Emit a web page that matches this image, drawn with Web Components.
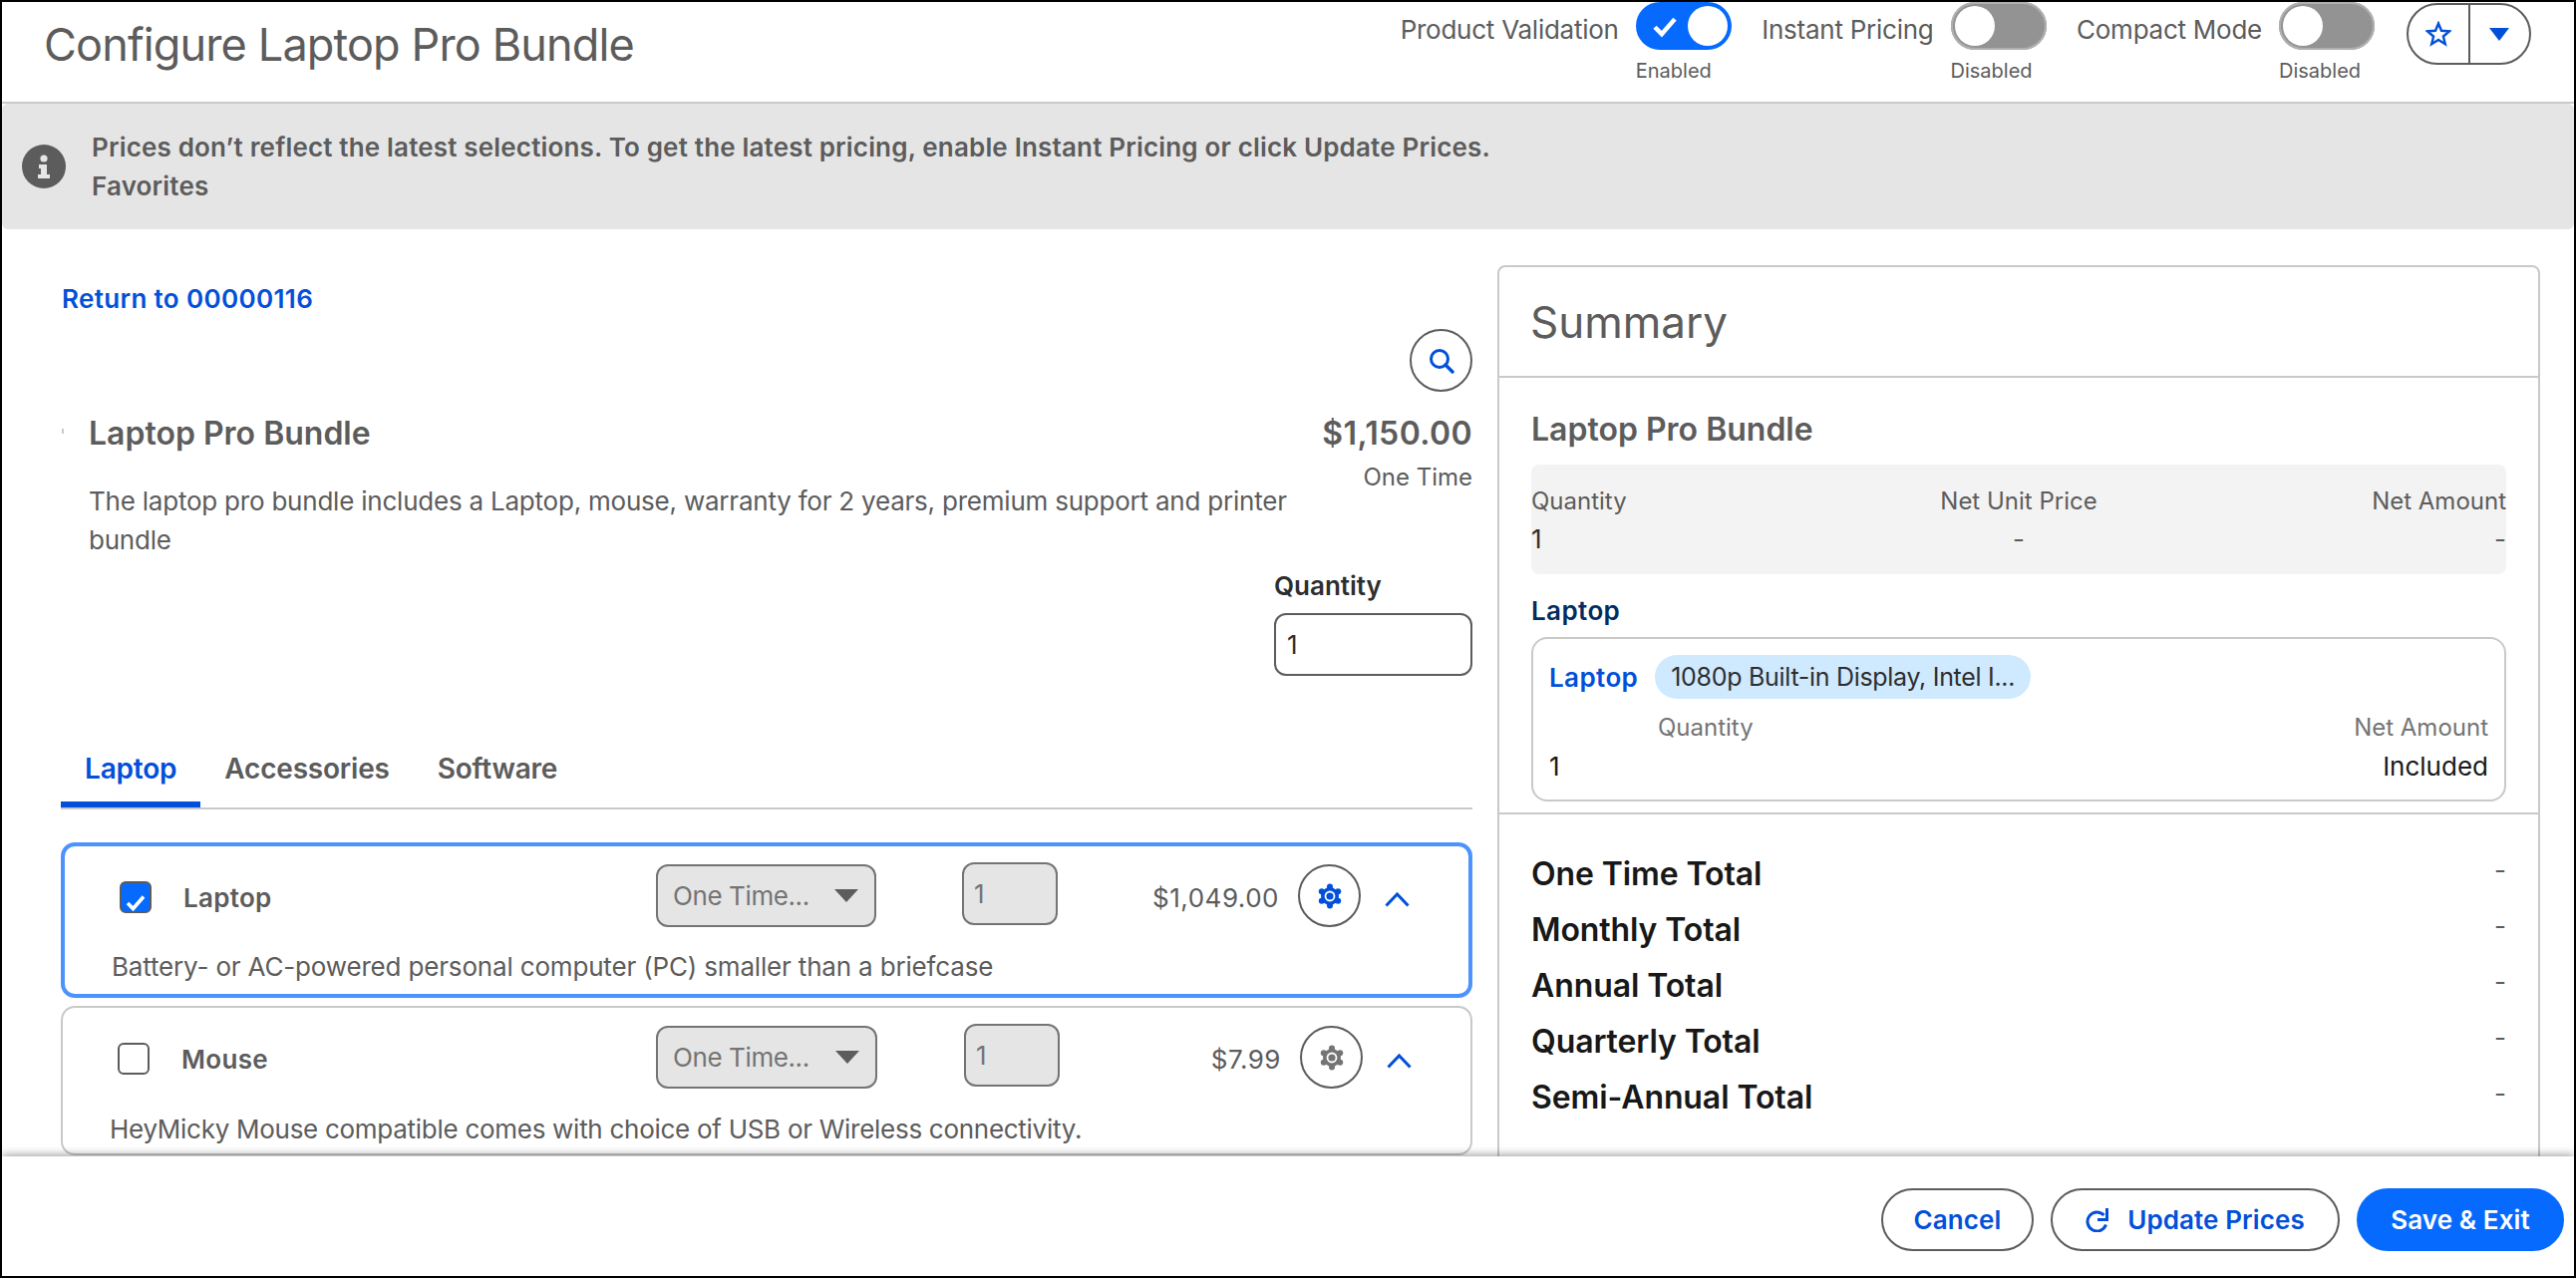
<!DOCTYPE html>
<html lang="en">
<head>
<meta charset="utf-8">
<title>Configure Laptop Pro Bundle</title>
<style>
  html, body { margin: 0; height: 100%; }
  body { font: 26px/39px Inter, "Liberation Sans", sans-serif; color: #5c5c5c; }
</style>
</head>
<body>
<cfg-app>
  <cfg-topbar>
    <cfg-toggle label="Product Validation" status="Enabled" on></cfg-toggle>
    <cfg-toggle label="Instant Pricing" status="Disabled"></cfg-toggle>
    <cfg-toggle label="Compact Mode" status="Disabled"></cfg-toggle>
  </cfg-topbar>
  <cfg-banner>
    Prices don’t reflect the latest selections. To get the latest pricing, enable Instant Pricing or click Update Prices.<br>Favorites
  </cfg-banner>
  <cfg-main>
    <cfg-product>
      <cfg-option slot="options" selected price="$1,049.00">
        Laptop
        <span slot="desc" style="letter-spacing:-.17px">Battery- or AC-powered personal computer (PC) smaller than a briefcase</span>
      </cfg-option>
      <cfg-option slot="options" price="$7.99">
        Mouse
        <span slot="desc" style="letter-spacing:-.28px">HeyMicky Mouse compatible comes with choice of USB or Wireless connectivity.</span>
      </cfg-option>
    </cfg-product>
    <cfg-summary></cfg-summary>
  </cfg-main>
  <cfg-footer></cfg-footer>
</cfg-app>

<script>
const BLUE = '#0250d9';

const icons = {
  check: '<svg viewBox="0 0 24 24" width="100%" height="100%"><path d="M4 13l5.5 5.5L20 6.500" fill="none" stroke="currentColor" stroke-width="3.600"/></svg>',
  star: '<svg viewBox="0 0 26 26" width="26" height="26"><path d="M13 2.500l3 7.300 7.900.6-6 5.100 1.900 7.700L13 19l-6.800 4.200 1.900-7.700-6-5.100 7.900-.6z" fill="none" stroke="currentColor" stroke-width="2.400" stroke-linejoin="miter"/></svg>',
  down: '<svg viewBox="0 0 20 13" width="20" height="13"><path d="M0 0h20L10 13z" fill="currentColor"/></svg>',
  search: '<svg viewBox="0 0 26 26" width="26" height="26"><circle cx="11" cy="11" r="8.500" fill="none" stroke="currentColor" stroke-width="3"/><path d="M17 17l7 7" stroke="currentColor" stroke-width="3.400" stroke-linecap="round"/></svg>',
  info: '<svg viewBox="0 0 44 44" width="44" height="44"><circle cx="22" cy="22" r="22" fill="#5c5c5c"/><circle cx="22" cy="14" r="3.600" fill="#e5e5e5"/><path d="M17 20h8v10h3v4H16v-4h3v-6h-2z" fill="#e5e5e5"/></svg>',
  gear: '<svg viewBox="0 0 26 26" width="26" height="26"><g fill="currentColor"><circle cx="13" cy="13" r="9"/><circle cx="13" cy="3.500" r="3"/><circle cx="13" cy="22.500" r="3"/><circle cx="4.800" cy="8.200" r="3"/><circle cx="21.200" cy="8.200" r="3"/><circle cx="4.800" cy="17.800" r="3"/><circle cx="21.200" cy="17.800" r="3"/></g><circle cx="13" cy="13" r="5.400" fill="#fff"/><circle cx="13" cy="13" r="3.600" fill="currentColor"/></svg>',
  up: '<svg viewBox="0 0 25 16" width="25" height="16"><path d="M1.500 14.500L12.500 3l11 11.500" fill="none" stroke="currentColor" stroke-width="3"/></svg>',
  refresh: '<svg viewBox="0 0 24 24" width="24" height="24"><path d="M18.500 7A9.500 9.500 0 1 0 20.500 16.500" fill="none" stroke="currentColor" stroke-width="3"/><path d="M21.500 0v11.500H12" fill="none" stroke="currentColor" stroke-width="3"/></svg>',
  caret: '<svg viewBox="0 0 24 13" width="24" height="13"><path d="M0 0h24L12 13z" fill="#5c5c5c"/></svg>'
};

// small helper, every element here is just a shadow root with fixed markup
const define = (name, css, html) => customElements.define(name, class extends HTMLElement {
  connectedCallback() {
    if (this.shadowRoot) return;
    const markup = typeof html === 'function' ? html(this) : html;
    this.attachShadow({ mode: 'open' }).innerHTML = `<style>${css}</style>${markup}`;
  }
});

define('cfg-app', `
  :host { display: flex; flex-direction: column; box-sizing: border-box; width: 2584px; height: 1282px;
    border: 2px solid #000; background: #fff; overflow: hidden; }
`, '<slot></slot>');

define('cfg-topbar', `
  :host { display: flex; align-items: flex-start; flex: none; height: 100px; border-bottom: 2px solid #c9c9c9;
    padding: 0 43px 0 42px; }
  h1 { flex: 1; margin: 0; font-size: 45px; line-height: 56px; font-weight: 400; letter-spacing: -.85px; padding-top: 15px; color: #5c5c5c; }
  .tools { display: flex; gap: 30.500px; }
  .group { display: flex; width: 125px; height: 62px; margin: 1px 0 0 1.500px; box-sizing: border-box; border: 2px solid #5c5c5c;
    border-radius: 31px; color: ${BLUE}; }
  .group span { flex: 1; display: flex; align-items: center; justify-content: center; }
  .group span + span { border-left: 2px solid #5c5c5c; }
`, `<h1>Configure Laptop Pro Bundle</h1>
  <div class="tools"><slot></slot>
    <div class="group"><span>${icons.star}</span><span>${icons.down}</span></div>
  </div>`);

define('cfg-toggle', `
  :host { display: flex; align-items: flex-start; gap: 17px; font-size: 26px; letter-spacing: -.25px; }
  .label { line-height: 56px; }
  .track { display: flex; width: 96px; height: 48px; box-sizing: border-box; padding: 4px; border-radius: 24px;
    background: #939393; box-shadow: inset 0 0 0 2px #b0b0b0; }
  .on .track { background: #066afe; box-shadow: none; justify-content: space-between; color: #fff; }
  .knob { width: 40px; height: 40px; border-radius: 50%; background: #fff; }
  .tick { width: 30px; height: 30px; margin: 5px 0 0 10px; }
  .status { font-size: 20px; line-height: 30px; margin-top: 6px; letter-spacing: 0; }
`, el => `<span class="label">${el.getAttribute('label')}</span>
  <div class="${el.hasAttribute('on') ? 'on' : ''}">
    <div class="track">${el.hasAttribute('on') ? `<span class="tick">${icons.check}</span>` : ''}<span class="knob"></span></div>
    <div class="status">${el.getAttribute('status')}</div>
  </div>`);

define('cfg-banner', `
  :host { display: flex; align-items: center; gap: 26px; flex: none; box-sizing: border-box; height: 126px;
    padding: 0 20px; background: #e5e5e5; border-radius: 6px; font-weight: 600; letter-spacing: .17px; }
  svg { display: block; }
`, `<span>${icons.info}</span><div><slot></slot></div>`);

define('cfg-main', `
  :host { display: grid; grid-template-columns: 1415px 1046px; gap: 25px; flex: 1; min-height: 0; overflow: hidden;
    padding: 0 34px 0 60px; }
`, '<slot></slot>');

define('cfg-product', `
  :host { display: block; padding-top: 50px; }
  a { color: ${BLUE}; font-weight: 600; letter-spacing: .35px; }
  .finder { display: flex; justify-content: flex-end; margin-top: 11px; }
  .round { display: flex; align-items: center; justify-content: center; width: 63px; height: 63px; box-sizing: border-box;
    border: 2px solid #5c5c5c; border-radius: 50%; color: ${BLUE}; }
  .head { display: flex; justify-content: space-between; margin-top: 22px; }
  .dot { flex: none; width: 2px; height: 5px; background: #c9c9c9; margin: 15px 25px 0 0; }
  .info { flex: 1; }
  h2 { margin: 0; font-size: 32px; line-height: 40px; font-weight: 600; }
  p { margin: 28px 0 0; width: 1225px; letter-spacing: -.22px; }
  .price { text-align: right; flex: none; }
  .price b { display: block; font-size: 32px; line-height: 40px; font-weight: 600; letter-spacing: .4px; }
  .price span { display: block; font-size: 24px; line-height: 39px; margin-top: 4px; }
  .qty { width: 199px; margin: 7px 0 0 auto; }
  .qty label { display: block; font-weight: 600; color: #2e2e2e; }
  .field { box-sizing: border-box; height: 63px; margin-top: 8px; padding: 10px 11px; border: 2px solid #5c5c5c; border-radius: 12px; color: #2e2e2e; }
  .tabs { display: flex; margin: 73px 0 0 -1px; border-bottom: 2px solid #c9c9c9; font-size: 28px; font-weight: 600; letter-spacing: -.2px; }
  .tab { box-sizing: border-box; height: 59px; padding: 1px 24px 0; }
  .tab.active { color: ${BLUE}; border-bottom: 6px solid ${BLUE}; }
  .options { display: flex; flex-direction: column; gap: 8px; margin: 33px 0 0 -1px; }
`, `<a>Return to 00000116</a>
  <div class="finder"><span class="round">${icons.search}</span></div>
  <div class="head">
    <span class="dot"></span>
    <div class="info"><h2>Laptop Pro Bundle</h2>
      <p>The laptop pro bundle includes a Laptop, mouse, warranty for 2 years, premium support and printer bundle</p></div>
    <div class="price"><b>$1,150.00</b><span>One Time</span></div>
  </div>
  <div class="qty"><label>Quantity</label><div class="field">1</div></div>
  <div class="tabs"><div class="tab active">Laptop</div><div class="tab">Accessories</div><div class="tab">Software</div></div>
  <div class="options"><slot name="options"></slot></div>`);

define('cfg-option', `
  :host { display: block; box-sizing: border-box; border: 2px solid #c9c9c9; border-radius: 14px; padding: 18px 0 5px 47px;
    --lead: 476px; --sel: 222px; --sel-gap: 87px; --desc: 21px; }
  :host([selected]) { border: 4px solid #4d93ff; padding-bottom: 8px; --lead: 474px; --sel: 221px; --sel-gap: 86px; --desc: 20px; }
  .row { display: flex; align-items: flex-start; height: 63px; padding-left: 8px; }
  .box { flex: none; box-sizing: border-box; width: 32px; height: 32px; margin-top: 17px; padding: 2px; border: 2px solid #5c5c5c; border-radius: 6px; color: #fff; }
  :host([selected]) .box { background: #066afe; }
  .name { flex: none; box-sizing: border-box; width: var(--lead); margin-left: 32px; line-height: 39px; margin-top: 14px; font-weight: 600; letter-spacing: .3px; }
  .select { flex: none; display: flex; align-items: center; justify-content: space-between; box-sizing: border-box; width: var(--sel); height: 63px;
    padding: 0 16px 0 15px; background: #e5e5e5; border: 2px solid #747474; border-radius: 12px; color: #747474; letter-spacing: -.4px; }
  .num { flex: none; display: flex; align-items: center; box-sizing: border-box; width: 96px; height: 63px; margin: -2px 0 0 var(--sel-gap); padding: 0 10px; background: #e5e5e5; border: 2px solid #747474; border-radius: 12px; color: #747474; }
  .amount { flex: none; width: 222px; margin-top: 14px; text-align: right; letter-spacing: .5px; }
  .round { flex: none; display: flex; align-items: center; justify-content: center; box-sizing: border-box; width: 63px; height: 63px; margin-left: 19px; border: 2px solid #5c5c5c; border-radius: 50%; color: #747474; }
  :host([selected]) .round { color: ${BLUE}; }
  .up { flex: none; display: flex; margin: 27px 0 0 24px; color: ${BLUE}; }
  .desc { display: block; margin-top: var(--desc); }
`, el => `<div class="row">
    <span class="box">${el.hasAttribute('selected') ? icons.check : ''}</span>
    <span class="name"><slot></slot></span>
    <span class="select">One Time...${icons.caret}</span>
    <span class="num">1</span>
    <span class="amount">${el.getAttribute('price')}</span>
    <span class="round">${icons.gear}</span>
    <span class="up">${icons.up}</span>
  </div>
  <div class="desc"><slot name="desc"></slot></div>`);

define('cfg-summary', `
  :host { display: block; box-sizing: border-box; height: 1100px; margin-top: 36px; border: 2px solid #c9c9c9; border-radius: 8px; }
  .title { box-sizing: border-box; height: 111px; padding: 27px 32px 0 31px; font-size: 44px; line-height: 56px; border-bottom: 2px solid #c9c9c9; }
  .body { padding: 32px 32px 0; }
  h3 { margin: 0; font-size: 32px; line-height: 40px; font-weight: 600; }
  .stats { display: grid; grid-template-columns: 1fr auto 1fr; grid-template-rows: 38px 38px; align-items: center; height: 110px; box-sizing: border-box;
    margin-top: 15px; padding-top: 17px; background: #f3f3f3; border-radius: 8px; }
  .stats > :nth-child(3n+2) { text-align: center; }
  .stats > :nth-child(3n) { text-align: right; }
  .stats > :nth-child(-n+3) { font-size: 24px; }
  .stats .val { color: #2e2e2e; }
  h4 { margin: 16.500px 0 0; line-height: 39px; font-size: 26px; font-weight: 600; color: #032d60; letter-spacing: .4px; }
  .card { box-sizing: border-box; height: 165px; margin-top: 7.500px; padding: 16px 16px 0; border: 2px solid #c9c9c9; border-radius: 16px; }
  .line { display: flex; align-items: center; height: 44px; gap: 17px; }
  .line a { color: ${BLUE}; font-weight: 600; letter-spacing: .4px; }
  .chip { padding: 0 16px; height: 44px; line-height: 44px; background: #cfe9fe; border-radius: 22px; color: #2e2e2e; font-size: 25px; letter-spacing: -.3px; }
  .cols { display: flex; justify-content: space-between; margin-top: 9px; }
  .cols.head { padding-left: 109px; color: #747474; font-size: 24px; }
  .cols.vals { margin-top: 0; color: #181818; }
  hr { border: 0; border-top: 2px solid #c9c9c9; margin: 11px 0 0; }
  .totals { padding: 32px 32px 0; }
  .total { display: flex; justify-content: space-between; height: 56px; line-height: 56px; }
  .total b { font-size: 32px; font-weight: 600; color: #181818; letter-spacing: -.1px; }
  .total span { line-height: 48px; }
`, `<div class="title">Summary</div>
  <div class="body">
    <h3>Laptop Pro Bundle</h3>
    <div class="stats"><span>Quantity</span><span>Net Unit Price</span><span>Net Amount</span>
      <span class="val">1</span><span>-</span><span>-</span></div>
    <h4>Laptop</h4>
    <div class="card">
      <div class="line"><a>Laptop</a><span class="chip">1080p Built-in Display, Intel I...</span></div>
      <div class="cols head"><span>Quantity</span><span>Net Amount</span></div>
      <div class="cols vals"><span>1</span><span>Included</span></div>
    </div>
  </div>
  <hr>
  <div class="totals">
    <div class="total"><b>One Time Total</b><span>-</span></div>
    <div class="total"><b>Monthly Total</b><span>-</span></div>
    <div class="total"><b>Annual Total</b><span>-</span></div>
    <div class="total"><b>Quarterly Total</b><span>-</span></div>
    <div class="total"><b>Semi-Annual Total</b><span>-</span></div>
  </div>`);

define('cfg-footer', `
  :host { display: flex; justify-content: flex-end; gap: 17px; flex: none; box-sizing: border-box; height: 120px; padding: 32px 10px 0 0;
    background: #fff; box-shadow: 0 -2px 8px rgba(0,0,0,.35); z-index: 1; font-weight: 600; letter-spacing: .1px; }
  .btn { display: flex; align-items: center; justify-content: center; gap: 18px; box-sizing: border-box; height: 63px; border: 2px solid #5c5c5c;
    border-radius: 32px; color: ${BLUE}; }
  .primary { background: #066afe; border-color: #066afe; color: #fff; }
`, `<div class="btn" style="width:153px">Cancel</div>
  <div class="btn" style="width:290px">${icons.refresh}Update Prices</div>
  <div class="btn primary" style="width:208px">Save &amp; Exit</div>`);
</script>
</body>
</html>
